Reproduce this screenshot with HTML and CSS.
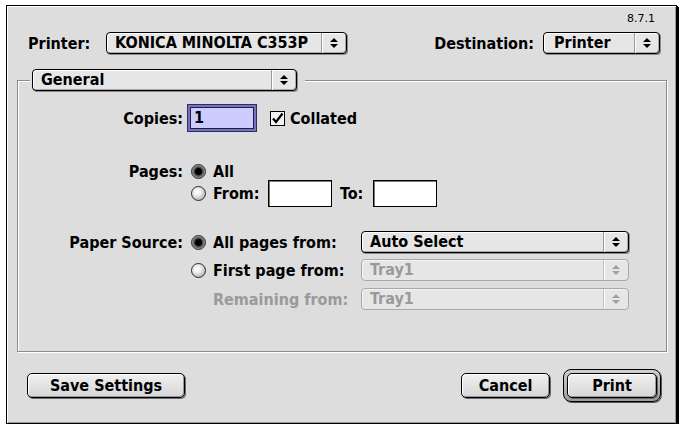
FILE: index.html
```html
<!DOCTYPE html>
<html>
<head>
<meta charset="utf-8">
<link rel="stylesheet" href="styles.css">
</head>
<body>
<div class="window">
  <div class="version">8.7.1</div>
  <div class="toprow">
    <div class="pair">
      <span class="lbl-printer">Printer:</span>
      <div class="popup printer">
        <span class="ptext">KONICA MINOLTA C353P</span>
        <span class="parrow"><svg width="8" height="12" viewBox="0 0 8 12"><path d="M0 5 L4 1 L8 5 Z M0 7 L4 11 L8 7 Z" fill="#000"/></svg></span>
      </div>
    </div>
    <div class="pair">
      <span class="lbl-dest">Destination:</span>
      <div class="popup dest">
        <span class="ptext">Printer</span>
        <span class="parrow"><svg width="8" height="12" viewBox="0 0 8 12"><path d="M0 5 L4 1 L8 5 Z M0 7 L4 11 L8 7 Z" fill="#000"/></svg></span>
      </div>
    </div>
  </div>

  <div class="group">
    <div class="group-head">
      <div class="popup general">
        <span class="ptext">General</span>
        <span class="parrow"><svg width="8" height="12" viewBox="0 0 8 12"><path d="M0 5 L4 1 L8 5 Z M0 7 L4 11 L8 7 Z" fill="#000"/></svg></span>
      </div>
    </div>

    <div class="row copies">
      <span class="rlabel">Copies:</span>
      <div class="edit focus">1</div>
      <svg class="check" width="15" height="15" viewBox="0 0 15 15"><rect x="0.5" y="0.5" width="14" height="14" fill="#f4f4f4" stroke="#000"/><path d="M3 7.5 L6 11 L12.5 2.5" fill="none" stroke="#000" stroke-width="2.2"/></svg>
      <span class="check-lbl">Collated</span>
    </div>

    <div class="row pages-all">
      <span class="rlabel">Pages:</span>
      <span class="radio on"></span>
      <span class="rtext">All</span>
    </div>
    <div class="row pages-from">
      <span class="rlabel"></span>
      <span class="radio"></span>
      <span class="rtext from-lbl">From:</span>
      <div class="edit"></div>
      <span class="to-lbl">To:</span>
      <div class="edit"></div>
    </div>

    <div class="row paper1">
      <span class="rlabel">Paper Source:</span>
      <div class="opt">
        <span class="radio on"></span>
        <span class="rtext">All pages from:</span>
      </div>
      <div class="popup tray">
        <span class="ptext">Auto Select</span>
        <span class="parrow"><svg width="8" height="12" viewBox="0 0 8 12"><path d="M0 5 L4 1 L8 5 Z M0 7 L4 11 L8 7 Z" fill="#000"/></svg></span>
      </div>
    </div>
    <div class="row paper2">
      <span class="rlabel"></span>
      <div class="opt">
        <span class="radio"></span>
        <span class="rtext">First page from:</span>
      </div>
      <div class="popup tray disabled">
        <span class="ptext">Tray1</span>
        <span class="parrow"><svg width="8" height="12" viewBox="0 0 8 12"><path d="M0 5 L4 1 L8 5 Z M0 7 L4 11 L8 7 Z" fill="#a0a0a0"/></svg></span>
      </div>
    </div>
    <div class="row paper3">
      <span class="rlabel"></span>
      <div class="opt">
        <span class="rtext remaining">Remaining from:</span>
      </div>
      <div class="popup tray disabled">
        <span class="ptext">Tray1</span>
        <span class="parrow"><svg width="8" height="12" viewBox="0 0 8 12"><path d="M0 5 L4 1 L8 5 Z M0 7 L4 11 L8 7 Z" fill="#a0a0a0"/></svg></span>
      </div>
    </div>
  </div>

  <div class="buttons">
    <button class="btn save">Save Settings</button>
    <div class="spacer"></div>
    <button class="btn cancel">Cancel</button>
    <div class="default-ring"><button class="btn print">Print</button></div>
  </div>
</div>
</body>
</html>
```
FILE: styles.css
```css
* { box-sizing: border-box; }

body {
  margin: 0;
  background: #fff;
  font-family: "DejaVu Sans Condensed", "DejaVu Sans", sans-serif;
  font-stretch: condensed;
  font-weight: 700;
  font-size: 16px;
  color: #000;
}

.window {
  margin: 5px 0 0 6px;
  width: 671px;
  height: 419px;
  border: 1px solid #000;
  background: #dddddd;
  box-shadow: 1px 1px 0 #000, 2px 2px 0 #000, inset 1px 1px 0 #fff, inset -1px -1px 0 #999;
  display: flex;
  flex-direction: column;
}

.version {
  font-family: "DejaVu Sans", sans-serif;
  font-stretch: normal;
  font-weight: 400;
  font-size: 11px;
  line-height: 12px;
  text-align: right;
  margin-top: 7px;
  padding-right: 21px;
}

.toprow {
  display: flex;
  justify-content: space-between;
  align-items: center;
  height: 22px;
  margin-top: 7px;
  padding: 0 16px 0 21px;
}

.pair { display: flex; align-items: center; }
.lbl-printer { width: 72px; margin-right: 6px; }
.lbl-dest { margin-right: 9px; }

.popup {
  height: 22px;
  display: flex;
  border: 1px solid #000;
  border-radius: 4px;
  background: #e6e6e6;
  box-shadow: inset 1px 1px 0 #fff, inset -1px -1px 0 #a8a8a8, 1px 1px 0 #8a8a8a;
  flex: none;
}
.ptext {
  flex: 1;
  padding-left: 8px;
  line-height: 20px;
  white-space: nowrap;
  overflow: hidden;
}
.parrow {
  width: 25px;
  border-left: 1px solid #9a9a9a;
  box-shadow: inset 1px 0 0 #fff;
  display: flex;
  align-items: center;
  justify-content: center;
}
.popup.printer { width: 241px; }
.popup.dest { width: 117px; }
.popup.dest .ptext { padding-left: 10px; }
.popup.general { width: 265px; }
.popup.tray { width: 268px; }
.popup.disabled {
  border-color: #a8a8a8;
  color: #9a9a9a;
  box-shadow: inset 1px 1px 0 #f4f4f4;
}
.popup.disabled .parrow { border-left-color: #c0c0c0; }

.group {
  margin: 26px 9px 0 10px;
  height: 272px;
  border: 1px solid #8c8c8c;
  box-shadow: inset 1px 1px 0 #fff, 1px 1px 0 #fff;
  display: flex;
  flex-direction: column;
}
.group-head {
  align-self: flex-start;
  margin: -12px 0 0 12px;
  padding: 0 8px 0 2px;
  background: #dddddd;
  display: flex;
}

.row { display: flex; align-items: center; }
.rlabel { width: 165px; margin-right: 4px; text-align: right; flex: none; }

.copies { height: 28px; margin-top: 13px; }
.edit {
  width: 64px;
  height: 27px;
  background: #fff;
  border: 1px solid #000;
  box-shadow: inset 1px 1px 0 #777;
  flex: none;
  padding-left: 6px;
  line-height: 25px;
}
.edit.focus {
  width: 70px;
  height: 28px;
  background: #ccccff;
  border: 1px solid #2c2c66;
  box-shadow: inset 0 0 0 2px #7373cc, inset 0 0 0 3px #222;
  line-height: 26px;
}
.check { margin-left: 13px; flex: none; }
.check-lbl { margin-left: 5px; }

.radio {
  width: 15px;
  height: 15px;
  margin-left: 4px;
  border-radius: 50%;
  border: 1px solid #2a2a2a;
  background: radial-gradient(circle at 40% 38%, #fff 0, #f0f0f0 30%, #b8b8b8 75%, #8a8a8a 100%);
  flex: none;
}
.radio.on {
  background: radial-gradient(circle at 50% 50%, #000 0, #000 3px, #444 4px, #777 5.5px, #c8c8c8 7.5px);
}
.rtext { margin-left: 7px; white-space: nowrap; }

.pages-all { height: 16px; margin-top: 31px; }
.pages-from { height: 27px; margin-top: 1px; }
.from-lbl { width: 55px; }
.to-lbl { margin-left: 8px; width: 33px; }

.opt { width: 174px; display: flex; align-items: center; flex: none; }
.paper1 { height: 22px; margin-top: 24px; }
.paper2 { height: 22px; margin-top: 6px; }
.paper3 { height: 22px; margin-top: 7px; }
.remaining { margin-left: 26px; color: #9a9a9a; }

.buttons {
  display: flex;
  align-items: center;
  height: 33px;
  margin-top: 17px;
  padding: 0 15px 0 20px;
}
.spacer { flex: 1; }
.btn {
  height: 25px;
  border: 1px solid #000;
  border-radius: 5px;
  background: linear-gradient(#f0f0f0, #d6d6d6);
  box-shadow: inset 1px 1px 0 #fff, inset -1px -1px 0 #999, 1px 1px 0 #6a6a6a;
  font: inherit;
  color: #000;
  padding: 0;
  flex: none;
}
.btn.save { width: 158px; }
.btn.cancel { width: 89px; margin-right: 13px; }
.default-ring {
  width: 98px;
  height: 33px;
  border: 1px solid #000;
  border-radius: 8px;
  padding: 3px;
  background: linear-gradient(#d0d0d0, #9c9c9c);
  box-shadow: 1px 1px 0 #555;
  display: flex;
}
.btn.print { width: 90px; }
```
